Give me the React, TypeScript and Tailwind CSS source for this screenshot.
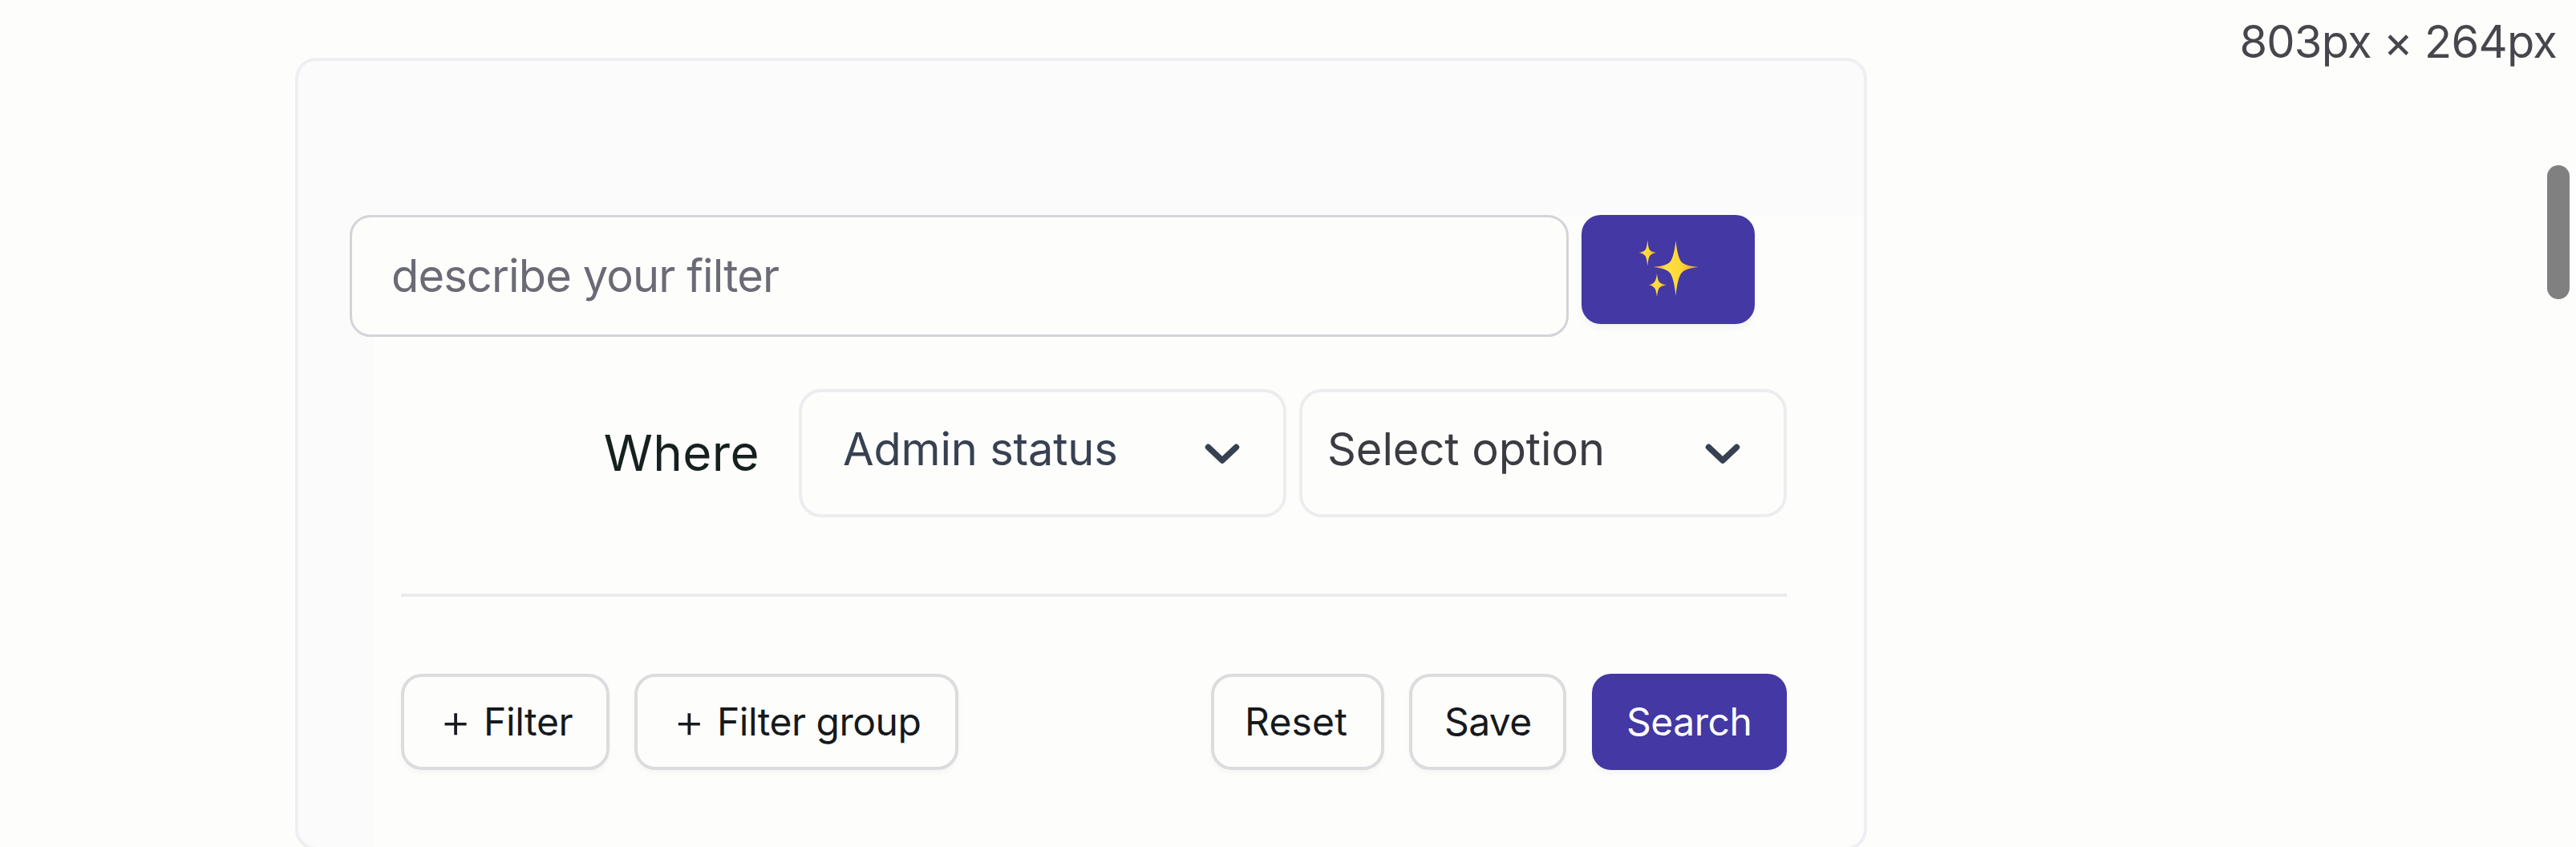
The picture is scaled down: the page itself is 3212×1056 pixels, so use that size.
import React from "react";

function Chevron() {
  return (
    <svg width="44" height="28" viewBox="0 0 44 28" fill="none" className="shrink-0">
      <path d="M4.5 6.5 L22 23 L39.5 6.5" stroke="#374151" strokeWidth="7.5" strokeLinecap="round" strokeLinejoin="round" />
    </svg>
  );
}

function Sparkles() {
  return (
    <svg width="76" height="72" viewBox="0 0 76 72" className="block">
      <defs>
        <linearGradient id="spark" x1="0" y1="0" x2="1" y2="0">
          <stop offset="0" stopColor="#f08a3c" />
          <stop offset="0.28" stopColor="#fde047" />
          <stop offset="0.6" stopColor="#fdd835" />
          <stop offset="1" stopColor="#e89a2c" />
        </linearGradient>
      </defs>
      <g fill="url(#spark)">
        <path d="M46.5 1 C48 16 51 25 54 28 C57 31 64 33 75 34 C64 35 57 37.5 54 41 C51 44 48 54 46.5 70 C45 54 42 44 39 41 C36 37.5 29 35 18 34 C29 33 36 31 39 28 C42 25 45 16 46.5 1 Z" />
        <path d="M11.3 0 C12 8 13 11.5 14.5 13 C16 14.5 18 15 22 16 C18 17 16 17.8 14.5 19.5 C13 21.5 12 25 11.3 33 C10.6 25 9.6 21.5 8.1 19.5 C6.6 17.8 4.6 17 .6 16 C4.6 15 6.6 14.5 8.1 13 C9.6 11.5 10.6 8 11.3 0 Z" />
        <path d="M23 42 C23.7 48 24.7 51 26.2 52.7 C27.7 54.3 30 55.2 35.5 56.3 C30 57.3 27.7 58.2 26.2 59.8 C24.7 61.4 23.7 65 23 71 C22.3 65 21.3 61.4 19.8 59.8 C18.3 58.2 17 57.3 12.5 56.3 C17 55.2 18.3 54.3 19.8 52.7 C21.3 51 22.3 48 23 42 Z" />
      </g>
    </svg>
  );
}

function Plus() {
  return <span className="w-[32px] text-[60px] font-light leading-[48px] -mt-[5px] mr-[19px] flex justify-center">+</span>;
}

const outlineButton =
  "flex items-center h-[120px] rounded-[26px] border-4 border-[#dcdcdf] text-[48px] leading-none text-[#16191d] whitespace-nowrap shadow-[0_4px_6px_rgba(0,0,0,0.03)]";

export default function App() {
  return (
    <div className="relative flex justify-between w-[3212px] h-[1056px] overflow-hidden bg-[#fdfdfc] font-['Inter',sans-serif]">
      <main className="ml-[368px] mt-[72px] w-[1960px] h-[988px] shrink-0 rounded-[26px] border-4 border-[#efeff3] bg-[linear-gradient(to_right,#fbfbfb_93px,transparent_93px),linear-gradient(to_bottom,#fbfbfb_194px,transparent_194px)]">
        <form className="flex items-start gap-[16px] pl-[64px] pt-[192px]" onSubmit={(e) => e.preventDefault()}>
          <div className="flex items-center w-[1520px] h-[152px] rounded-[26px] border-[3px] border-[#d4d4d8] bg-[#fdfdfc] pl-[49px] pb-[1px] text-[56px] leading-none tracking-[-0.88px] text-[#6b6b76]">
            describe your filter
          </div>
          <button type="button" className="flex items-center justify-center w-[216px] h-[136px] rounded-[24px] bg-[#4338a4] pb-[2px] pl-[2px] shadow-[0_6px_8px_rgba(0,0,0,0.04)]">
            <Sparkles />
          </button>
        </form>

        <div className="ml-[128px] w-[1728px]">
          <div className="flex items-center justify-end h-[160px] mt-[65px]">
            <span className="mr-[49px] pb-[1px] text-[62px] leading-none tracking-[0.4px] text-[#16211f]">Where</span>
            <div className="flex items-center justify-between w-[608px] h-[160px] rounded-[28px] border-4 border-[#ededf0] pl-[51px] pr-[54px] mr-[16px]">
              <span className="pb-[11px] text-[56px] leading-none tracking-[-0.2px] text-[#374151]">Admin status</span>
              <Chevron />
            </div>
            <div className="flex items-center justify-between w-[608px] h-[160px] rounded-[28px] border-4 border-[#ededf0] pl-[31px] pr-[54px]">
              <span className="pb-[11px] text-[56px] leading-none tracking-[-0.1px] text-[#3b3c42]">Select option</span>
              <Chevron />
            </div>
          </div>

          <div className="mt-[95px] h-[4px] bg-[#ebebee]" />

          <div className="flex items-center mt-[96px]">
            <button type="button" className={outlineButton + " w-[260px] pl-[48px] tracking-[-0.4px]"}>
              <Plus />
              Filter
            </button>
            <button type="button" className={outlineButton + " w-[404px] pl-[48px] ml-[31px] tracking-[-0.5px]"}>
              <Plus />
              Filter group
            </button>
            <button type="button" className={outlineButton + " w-[216px] pl-[38px] ml-auto tracking-[0.2px]"}>
              Reset
            </button>
            <button type="button" className={outlineButton + " w-[196px] pl-[40px] ml-[31px] tracking-[-0.6px]"}>
              Save
            </button>
            <button type="button" className="flex items-center w-[243px] h-[120px] pl-[43px] ml-[32px] rounded-[24px] bg-[#4338a4] text-[48px] leading-none tracking-[-0.5px] text-white shadow-[0_4px_6px_rgba(0,0,0,0.04)]">
              Search
            </button>
          </div>
        </div>
      </main>

      <div className="pt-[24px] pr-[24px] text-[56px] leading-none tracking-[-0.75px] text-[#46464c] whitespace-nowrap">803px × 264px</div>
      <div className="absolute right-[8px] top-[206px] w-[28px] h-[167px] rounded-full bg-[#808080]" />
    </div>
  );
}
